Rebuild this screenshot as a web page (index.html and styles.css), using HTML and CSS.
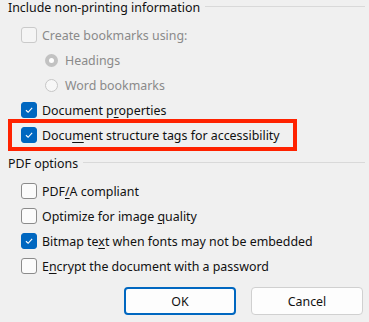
FILE: index.html
```html
<!DOCTYPE html>
<html>
<head>
<meta charset="utf-8">
<link rel="stylesheet" href="styles.css">
</head>
<body>
<div class="dialog">
  <div class="group-head"><span>Include non-printing information</span><div class="rule"></div></div>
  <div class="rows">
    <div class="row disabled">
      <span class="cb"></span><span class="label">Create bookmarks using:</span>
    </div>
    <div class="row sub disabled">
      <span class="radio on"></span><span class="label">Headings</span>
    </div>
    <div class="row sub disabled">
      <span class="radio"></span><span class="label">Word bookmarks</span>
    </div>
    <div class="row">
      <span class="cb checked"><svg viewBox="0 0 16 16"><path d="M4.5 8.3 L7 10.6 L11.6 5.6"/></svg></span><span class="label">Document p<u>r</u>operties</span>
    </div>
    <div class="row highlight">
      <span class="cb checked"><svg viewBox="0 0 16 16"><path d="M4.5 8.3 L7 10.6 L11.6 5.6"/></svg></span><span class="label">Docu<u>m</u>ent structure tags for accessibility</span>
    </div>
  </div>
  <div class="group-head second"><span>PDF options</span><div class="rule"></div></div>
  <div class="rows">
    <div class="row">
      <span class="cb"></span><span class="label">PDF<u>/</u>A compliant</span>
    </div>
    <div class="row">
      <span class="cb"></span><span class="label">Optimize for image <u>q</u>uality</span>
    </div>
    <div class="row">
      <span class="cb checked"><svg viewBox="0 0 16 16"><path d="M4.5 8.3 L7 10.6 L11.6 5.6"/></svg></span><span class="label">Bitmap te<u>x</u>t when fonts may not be embedded</span>
    </div>
    <div class="row">
      <span class="cb"></span><span class="label">E<u>n</u>crypt the document with a password</span>
    </div>
  </div>
  <div class="buttons">
    <button class="btn primary">OK</button>
    <button class="btn">Cancel</button>
  </div>
</div>
</body>
</html>
```
FILE: styles.css
```css
html, body {
  margin: 0;
  padding: 0;
  background: #f0f0f0;
}
body {
  font-family: "Noto Sans", "Open Sans", sans-serif;
  font-size: 12.4px;
  color: #111;
}
.dialog {
  width: 369px;
  height: 322px;
  overflow: hidden;
}
.group-head {
  display: flex;
  align-items: center;
  height: 16px;
  line-height: 16px;
  padding-left: 8px;
  padding-right: 4px;
}
.group-head.second {
  margin-top: 8.5px;
}
.group-head .rule {
  flex: 1;
  height: 1px;
  background: #d9d9d9;
  margin-left: 5px;
  margin-top: -3px;
}
.rows {
  padding-top: 6.5px;
  display: flex;
  flex-direction: column;
}
.row {
  height: 25px;
  display: flex;
  align-items: center;
  padding-left: 21px;
  position: relative;
}
.row.sub {
  padding-left: 45px;
}
.row.disabled {
  color: #8a8a8a;
}
.cb {
  width: 14px;
  height: 14px;
  border: 1px solid #8b8b8b;
  border-radius: 3px;
  background: #fbfbfb;
  margin-right: 5px;
  flex: none;
  display: flex;
}
.row.disabled .cb {
  border-color: #cacaca;
  background: #f5f5f5;
}
.cb.checked {
  background: #0067c0;
  border-color: #0067c0;
}
.cb svg {
  width: 14px;
  height: 14px;
}
.cb svg path {
  fill: none;
  stroke: #fff;
  stroke-width: 1.3;
}
.radio {
  width: 11px;
  height: 11px;
  border: 1px solid #c6c6c6;
  border-radius: 50%;
  background: #f7f7f7;
  margin-right: 7px;
  flex: none;
  box-sizing: content-box;
}
.radio.on {
  background: #fff;
  border: 4px solid #c2c2c2;
  width: 5px;
  height: 5px;
}
.label u {
  text-decoration-thickness: 1px;
  text-underline-offset: 2px;
}
.row.highlight::after {
  content: "";
  position: absolute;
  left: 8px;
  top: -3.5px;
  width: 281px;
  height: 24px;
  border: 4px solid #ff2200;
}
.buttons {
  display: flex;
  justify-content: flex-end;
  gap: 15px;
  padding-right: 6px;
  margin-top: 8.5px;
}
.btn {
  width: 112px;
  height: 28px;
  font: inherit;
  color: #111;
  background: #fdfdfd;
  border: 1px solid #d0d0d0;
  border-radius: 4px;
  padding: 0;
}
.btn.primary {
  border: 2px solid #0067c0;
}
```
